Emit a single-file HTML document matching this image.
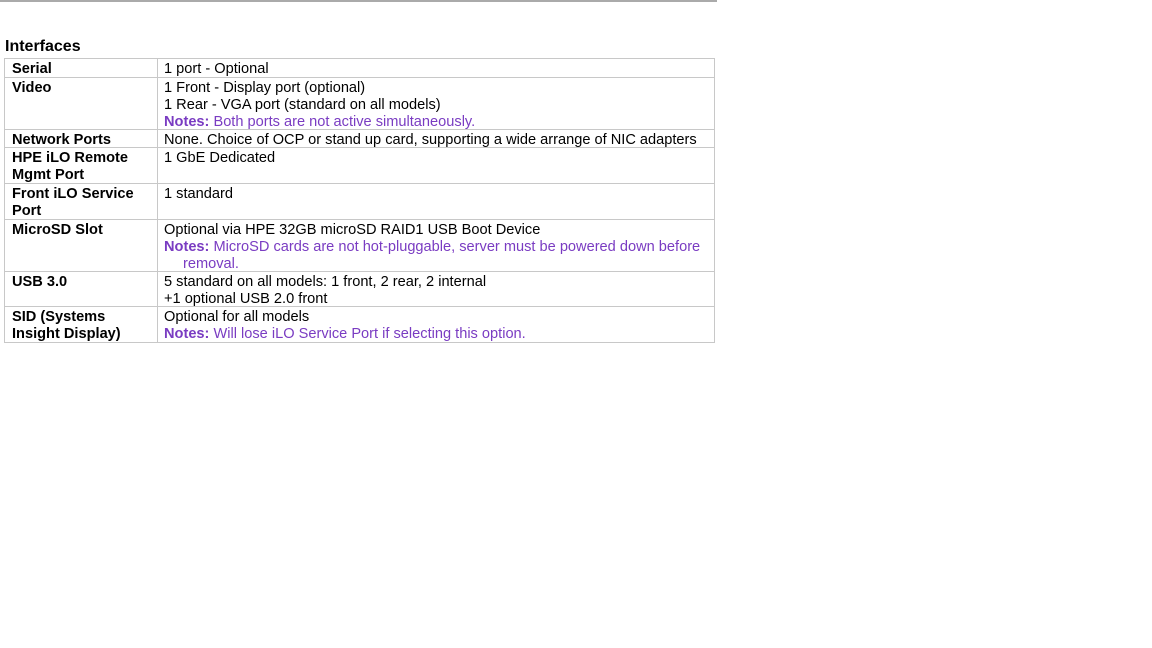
<!DOCTYPE html>
<html><head><style>
body{margin:0;background:#fff;font-family:"Liberation Sans",Arial,sans-serif;font-size:14.6px;color:#000;}
.top{position:absolute;left:0;top:0;width:717px;height:2px;background:#aaa;}
h3{position:absolute;left:5px;top:38px;margin:0;font-size:16px;font-weight:bold;}
table{position:absolute;left:4px;top:58px;width:711px;border-collapse:collapse;table-layout:fixed;}
td{border:1px solid #c8c8c8;vertical-align:top;padding:0 6px;line-height:17px;white-space:nowrap;}
td>div{position:relative;top:2px;}
td.l{width:139px;font-weight:bold;padding-left:7px;}
.n{color:#7a3cc2;}
.n b{font-weight:bold;}
.ind{padding-left:19px;}
</style></head><body>
<div class="top"></div>
<h3>Interfaces</h3>
<table>
<tr style="height:19px"><td class="l"><div>Serial</div></td><td><div>1 port - Optional</div></td></tr>
<tr style="height:52px"><td class="l"><div>Video</div></td><td><div>1 Front - Display port (optional)<br>1 Rear - VGA port (standard on all models)<br><span class="n"><b>Notes:</b> Both ports are not active simultaneously.</span></div></td></tr>
<tr style="height:18px"><td class="l"><div>Network Ports</div></td><td><div>None. Choice of OCP or stand up card, supporting a wide arrange of NIC adapters</div></td></tr>
<tr style="height:36px"><td class="l"><div>HPE iLO Remote<br>Mgmt Port</div></td><td><div>1 GbE Dedicated</div></td></tr>
<tr style="height:36px"><td class="l"><div>Front iLO Service<br>Port</div></td><td><div>1 standard</div></td></tr>
<tr style="height:52px"><td class="l"><div>MicroSD Slot</div></td><td><div>Optional via HPE 32GB microSD RAID1 USB Boot Device<br><span class="n"><b>Notes:</b> MicroSD cards are not hot-pluggable, server must be powered down before<br><span class="ind">removal.</span></span></div></td></tr>
<tr style="height:34px"><td class="l"><div>USB 3.0</div></td><td><div>5 standard on all models: 1 front, 2 rear, 2 internal<br>+1 optional USB 2.0 front</div></td></tr>
<tr style="height:36px"><td class="l"><div>SID (Systems<br>Insight Display)</div></td><td><div>Optional for all models<br><span class="n"><b>Notes:</b> Will lose iLO Service Port if selecting this option.</span></div></td></tr>
</table>
</body></html>
